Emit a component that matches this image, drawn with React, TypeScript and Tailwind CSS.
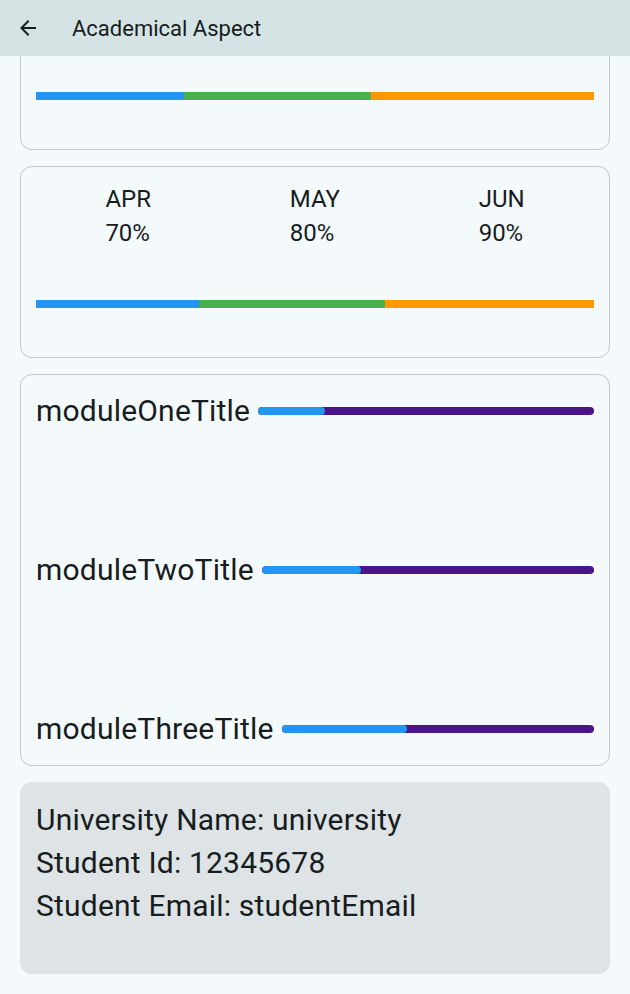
import React from 'react';

const font = { fontFamily: 'Roboto, "Noto Sans", sans-serif' };

const months = [
  { name: 'APR', value: '70%' },
  { name: 'MAY', value: '80%' },
  { name: 'JUN', value: '90%' },
];

const modules = [
  { title: 'moduleOneTitle', progress: 0.2 },
  { title: 'moduleTwoTitle', progress: 0.3 },
  { title: 'moduleThreeTitle', progress: 0.4 },
];

function SplitBar({ parts }: { parts: number[] }) {
  return (
    <div className="flex h-[8px] w-full">
      <div className="bg-[#2196f3]" style={{ flexGrow: parts[0] }} />
      <div className="bg-[#4caf50]" style={{ flexGrow: parts[1] }} />
      <div className="bg-[#ff9800]" style={{ flexGrow: parts[2] }} />
    </div>
  );
}

function MonthCard({ parts, data }: { parts: number[]; data: typeof months }) {
  return (
    <div className="h-[192px] rounded-xl border border-[#c0c8ca] px-[15px] pt-[15px]">
      <div className="flex justify-around">
        {data.map((m) => (
          <div key={m.name} className="flex flex-col text-[24px] leading-[34px] text-[#171d1e]">
            <span>{m.name}</span>
            <span>{m.value}</span>
          </div>
        ))}
      </div>
      <div className="mt-[50px]">
        <SplitBar parts={parts} />
      </div>
    </div>
  );
}

function ModuleRow({ title, progress }: { title: string; progress: number }) {
  return (
    <div className="flex h-[36px] items-center">
      <span className="text-[30px] leading-[36px] tracking-[0.2px] text-[#171d1e]">{title}</span>
      <div className="ml-[8px] flex h-[8px] flex-1 overflow-hidden rounded-full bg-[#4a148c]">
        <div className="h-full rounded-full bg-[#2196f3]" style={{ width: `${progress * 100}%` }} />
      </div>
    </div>
  );
}

export default function App() {
  return (
    <div className="flex h-[994px] w-[630px] flex-col bg-[#f4f9fb]" style={font}>
      {/* App bar */}
      <div className="z-10 flex h-[56px] shrink-0 items-center bg-[#d6e3e4] px-[16px]">
        <svg width="24" height="24" viewBox="0 0 24 24" className="text-[#171d1e]">
          <path d="M20 11H7.83l5.59-5.59L12 4l-8 8 8 8 1.41-1.41L7.83 13H20v-2z" fill="currentColor" />
        </svg>
        <span className="ml-[32px] text-[22px] text-[#171d1e]">Academical Aspect</span>
      </div>

      <div className="flex-1 overflow-hidden">
        <div className="-mt-[98px] flex flex-col gap-[16px] px-[20px]">
          <MonthCard parts={[148, 187, 223]} data={[
            { name: 'JAN', value: '60%' },
            { name: 'FEB', value: '75%' },
            { name: 'MAR', value: '90%' },
          ]} />
          <MonthCard parts={[70, 80, 90]} data={months} />

          <div className="flex h-[392px] flex-col justify-between rounded-xl border border-[#c0c8ca] px-[15px] pt-[18px] pb-[18px]">
            {modules.map((m) => (
              <ModuleRow key={m.title} title={m.title} progress={m.progress} />
            ))}
          </div>

          <div className="h-[192px] rounded-xl bg-[#dee3e5] px-[16px] pt-[16px] text-[30px] leading-[43px] tracking-[0.2px] text-[#171d1e]">
            <div>University Name: university</div>
            <div>Student Id: 12345678</div>
            <div>Student Email: studentEmail</div>
          </div>
        </div>
      </div>
    </div>
  );
}
